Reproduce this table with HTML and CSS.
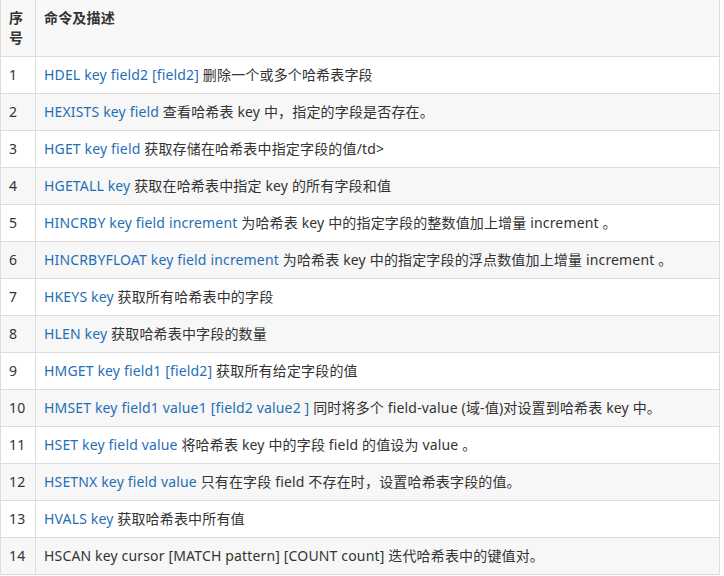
FILE: index.html
```html
<!DOCTYPE html>
<html lang="zh-CN">
<head>
<meta charset="utf-8">
<title>Redis 哈希命令</title>
<link rel="stylesheet" href="styles.css">
</head>
<body>
<table class="cmd-table">
  <thead>
    <tr><th class="num">序号</th><th class="desc">命令及描述</th></tr>
  </thead>
  <tbody>
    <tr><td class="num">1</td><td><a class="cmd">HDEL key field2 [field2]</a> 删除一个或多个哈希表字段</td></tr>
    <tr><td class="num">2</td><td><a class="cmd">HEXISTS key field</a> 查看哈希表 key 中，指定的字段是否存在。</td></tr>
    <tr><td class="num">3</td><td><a class="cmd">HGET key field</a> 获取存储在哈希表中指定字段的值/td&gt;</td></tr>
    <tr><td class="num">4</td><td><a class="cmd">HGETALL key</a> 获取在哈希表中指定 key 的所有字段和值</td></tr>
    <tr><td class="num">5</td><td><a class="cmd">HINCRBY key field increment</a> 为哈希表 key 中的指定字段的整数值加上增量 increment 。</td></tr>
    <tr><td class="num">6</td><td><a class="cmd">HINCRBYFLOAT key field increment</a> 为哈希表 key 中的指定字段的浮点数值加上增量 increment 。</td></tr>
    <tr><td class="num">7</td><td><a class="cmd">HKEYS key</a> 获取所有哈希表中的字段</td></tr>
    <tr><td class="num">8</td><td><a class="cmd">HLEN key</a> 获取哈希表中字段的数量</td></tr>
    <tr><td class="num">9</td><td><a class="cmd">HMGET key field1 [field2]</a> 获取所有给定字段的值</td></tr>
    <tr><td class="num">10</td><td><a class="cmd">HMSET key field1 value1 [field2 value2 ]</a> 同时将多个 field-value (域-值)对设置到哈希表 key 中。</td></tr>
    <tr><td class="num">11</td><td><a class="cmd">HSET key field value</a> 将哈希表 key 中的字段 field 的值设为 value 。</td></tr>
    <tr><td class="num">12</td><td><a class="cmd">HSETNX key field value</a> 只有在字段 field 不存在时，设置哈希表字段的值。</td></tr>
    <tr><td class="num">13</td><td><a class="cmd">HVALS key</a> 获取哈希表中所有值</td></tr>
    <tr><td class="num">14</td><td>HSCAN key cursor [MATCH pattern] [COUNT count] 迭代哈希表中的键值对。</td></tr>
  </tbody>
</table>
</body>
</html>
```
FILE: styles.css
```css
html, body {
  margin: 0;
  padding: 0;
  background: #fff;
}
body {
  font-family: "Noto Sans", "Noto Sans CJK SC", sans-serif;
  font-size: 14px;
  line-height: 20px;
  letter-spacing: 0.16px;
  color: #333;
}
.cmd-table {
  width: 720px;
  border-collapse: collapse;
  border-spacing: 0;
}
.cmd-table th,
.cmd-table td {
  border: 1px solid #ddd;
  padding: 8px;
  text-align: left;
  vertical-align: top;
  height: 20px;
}
.cmd-table thead th {
  border-top: 0;
  background: #f8f8f8;
  font-weight: bold;
}
.cmd-table .num {
  width: 18px;
}
.cmd-table tbody tr:nth-child(even) td {
  background: #f7f7f7;
}
.cmd {
  color: #1f6fb6;
  text-decoration: none;
}
```
